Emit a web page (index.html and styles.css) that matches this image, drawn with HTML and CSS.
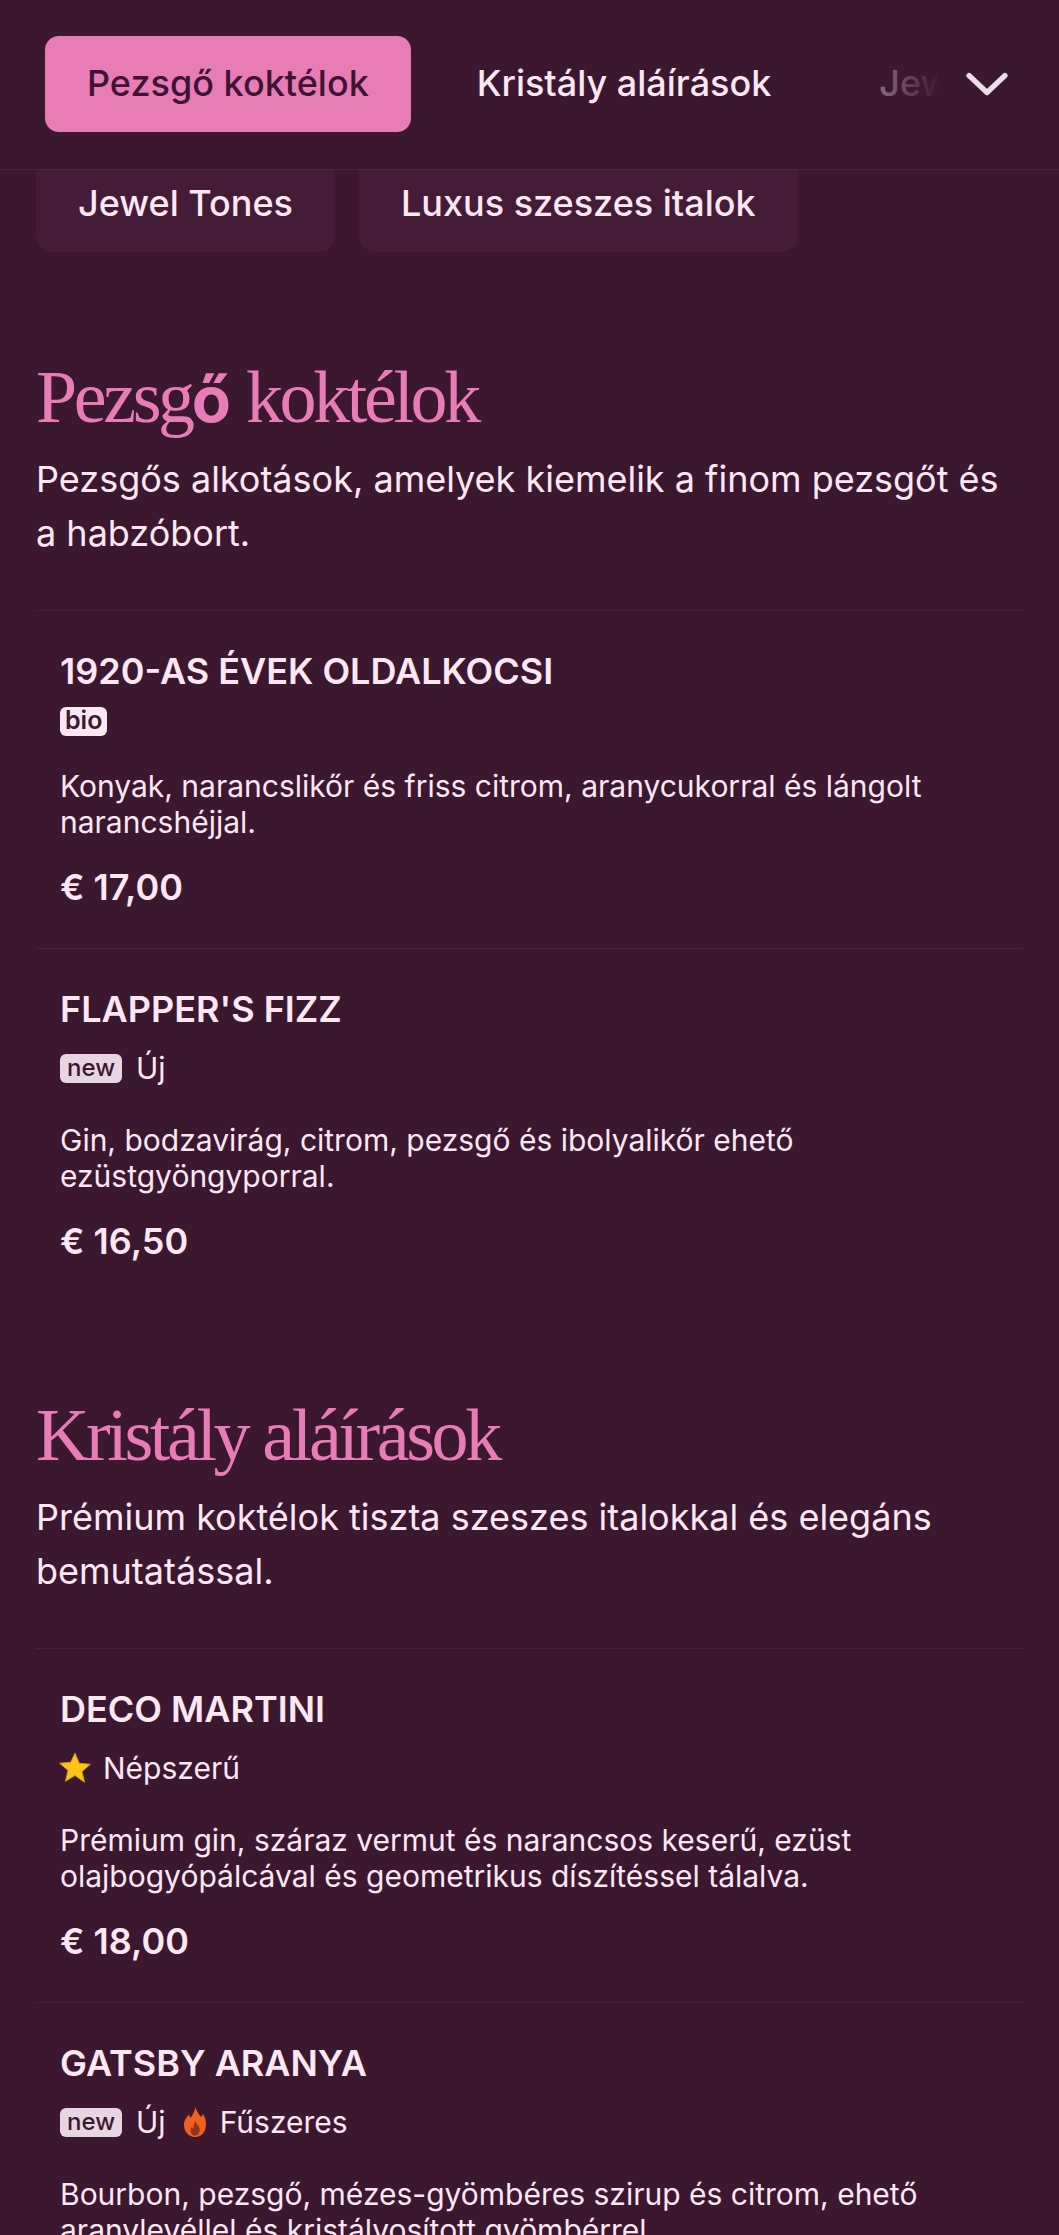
FILE: index.html
```html
<!DOCTYPE html>
<html lang="hu">
<head>
<meta charset="utf-8">
<title>Menü</title>
<link rel="stylesheet" href="styles.css">
</head>
<body>
<div class="page">
  <nav class="nav">
    <div class="tabs">
      <a class="tab active">Pezsgő koktélok</a>
      <a class="tab">Kristály aláírások</a>
      <a class="tab">Jewel Tones</a>
      <a class="tab">Luxus szeszes italok</a>
    </div>
    <button class="more" aria-label="Több">
      <svg viewBox="0 0 42 24" width="42" height="24"><path d="M3 3.500 21 20.500 39 3.500" fill="none" stroke="currentColor" stroke-width="5.200" stroke-linecap="round" stroke-linejoin="round"/></svg>
    </button>
  </nav>
  <div class="chips">
    <a class="chip">Jewel Tones</a>
    <a class="chip">Luxus szeszes italok</a>
  </div>

  <section class="section first">
    <h2 class="title">Pezsg<span class="fallback">ő</span> koktélok</h2>
    <p class="lead">Pezsgős alkotások, amelyek kiemelik a finom pezsgőt és a habzóbort.</p>
    <ul class="items">
      <li class="item">
        <h3 class="name">1920-AS ÉVEK OLDALKOCSI</h3>
        <div class="tags"><span class="badge bio">bio</span></div>
        <p class="desc">Konyak, narancslikőr és friss citrom, aranycukorral és lángolt narancshéjjal.</p>
        <div class="price">€ 17,00</div>
      </li>
      <li class="item">
        <h3 class="name">FLAPPER'S FIZZ</h3>
        <div class="tags text"><span class="badge new">new</span><span>Új</span></div>
        <p class="desc">Gin, bodzavirág, citrom, pezsgő és ibolyalikőr ehető ezüstgyöngyporral.</p>
        <div class="price">€ 16,50</div>
      </li>
    </ul>
  </section>

  <section class="section">
    <h2 class="title">Kristály aláírások</h2>
    <p class="lead">Prémium koktélok tiszta szeszes italokkal és elegáns bemutatással.</p>
    <ul class="items">
      <li class="item">
        <h3 class="name">DECO MARTINI</h3>
        <div class="tags text">
          <svg class="star" viewBox="0 0 32 32" width="34" height="34"><path d="M16 2l4.100 9.600 10.400.9-7.900 6.800 2.400 10.200L16 23.100 7 28.500l2.400-10.200-7.900-6.800 10.400-.9z" fill="#fcc419" stroke="#d99a0b" stroke-width=".8" stroke-linejoin="round"/></svg>
          <span>Népszerű</span>
        </div>
        <p class="desc">Prémium gin, száraz vermut és narancsos keserű, ezüst olajbogyópálcával és geometrikus díszítéssel tálalva.</p>
        <div class="price">€ 18,00</div>
      </li>
      <li class="item">
        <h3 class="name">GATSBY ARANYA</h3>
        <div class="tags text">
          <span class="badge new">new</span><span>Új</span>
          <svg class="fire" viewBox="0 0 22 30" width="22" height="30"><path d="M11.500 0c1 4.500 3.200 6.600 5.500 10 1.100-.8 1.600-2 1.800-3.200C21 10 22 13.500 22 17.500 22 24.500 17.500 30 11 30S0 24.500 0 17.800C0 13 3 10 5 7.500c.4 1.600 1 2.600 2 3.300C8.500 7.500 11 4.500 11.500 0z" fill="#f2601d"/><path d="M11.500 14c.6 2.600 2 3.700 3.300 5.800 1.400 2.300 1.300 5.300-.4 7.200-1 1.100-2.200 1.600-3.400 1.600s-2.500-.6-3.400-1.700c-1.500-1.900-1.500-4.700-.1-6.800.7 1 1.300 1.400 2.100 1.700-.4-2.900.5-5.700 1.900-7.800z" fill="#3b1730" opacity=".55"/></svg>
          <span>Fűszeres</span>
        </div>
        <p class="desc">Bourbon, pezsgő, mézes-gyömbéres szirup és citrom, ehető aranylevéllel és kristályosított gyömbérrel.</p>
        <div class="price">€ 19,00</div>
      </li>
    </ul>
  </section>
</div>
</body>
</html>
```

FILE: styles.css
```css
* { box-sizing: border-box; }
html, body { margin: 0; padding: 0; background: #3b1730; }
body { font-family: Inter, "Noto Sans", sans-serif; color: #fce7f3; }
.page { height: 2235px; overflow: hidden; }
a { display: block; }

.nav { position: relative; z-index: 2; height: 170px; background: #3b1730; border-bottom: 1px solid #46223b; display: flex; align-items: center; padding-left: 45px; overflow: hidden; }
.tabs { display: flex; gap: 24px; white-space: nowrap; margin-top: -1px; }
.tab { padding: 0 42px; height: 96px; line-height: 94px; font-size: 36px; font-weight: 500; border-radius: 14px; flex: none; }
.tab.active { background: #e87cb7; color: #3f1433; }
.more { position: absolute; right: 0; top: 0; bottom: 0; width: 269px; border: 0; padding: 0 51px 2px 0; color: #ecdde8; background: linear-gradient(to right, rgba(59,23,48,0), #3b1730 56%); display: flex; align-items: center; justify-content: flex-end; }

.chips { display: flex; gap: 24px; padding-left: 36px; margin-top: -20px; }
.chip { height: 102px; line-height: 106px; padding: 0 42px; background: #441c38; border-radius: 16px; font-size: 36px; font-weight: 500; }

.section { margin-top: 88px; padding: 0 36px; }
.section.first { margin-top: 100px; }
.title { margin: 0; height: 90px; line-height: 90px; font-family: "Liberation Serif", serif; font-weight: 400; font-size: 74px; letter-spacing: -3.400px; color: #e87cb7; }
.fallback { font-family: Inter, sans-serif; font-weight: 700; font-size: 64px; letter-spacing: 0; }
.lead { margin: 10px 0 50px; font-size: 36px; line-height: 54px; }

.items { list-style: none; margin: 0; padding: 0; }
.item { border-top: 1px solid #46223b; padding: 37px 24px 39px; }
.name { margin: 0; font-size: 36px; line-height: 46px; font-weight: 600; }
.tags { display: flex; align-items: center; margin-top: 13px; gap: 14px; font-size: 30px; line-height: 42px; }
.tags.text { line-height: 44px; margin-top: 14px; }
.badge { display: block; height: 29px; line-height: 27px; padding: 0 7px; border-radius: 6px; font-size: 24px; font-weight: 500; color: #3b1730; }
.bio { background: #fce7f3; font-weight: 600; padding: 0 5px; font-size: 25px; }
.new { background: #e8d5e2; }
.star { margin: 0 -3px 0 -2px; }
.fire { margin-left: 4px; }
.desc { margin: 32px 0 25px; font-size: 30px; line-height: 36px; }
.price { font-size: 36px; line-height: 44px; font-weight: 600; }
```
